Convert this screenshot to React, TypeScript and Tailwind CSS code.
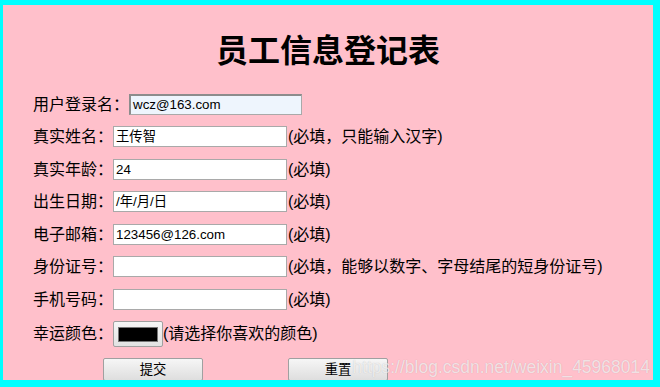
const font = "font-[family-name:'Liberation_Sans','Noto_Sans_CJK_SC',sans-serif]";

type Row = { label: string; value?: string; hint?: string; gap: string };

const rows: Row[] = [
  { label: '真实姓名：', value: '王传智', hint: '(必填，只能输入汉字)', gap: 'mt-[11px]' },
  { label: '真实年龄：', value: '24', hint: '(必填)', gap: 'mt-[12px]' },
  { label: '出生日期：', value: '/年/月/日', hint: '(必填)', gap: 'mt-[11px]' },
  { label: '电子邮箱：', value: '123456@126.com', hint: '(必填)', gap: 'mt-[12px]' },
  { label: '身份证号：', value: '', hint: '(必填，能够以数字、字母结尾的短身份证号)', gap: 'mt-[11px]' },
  { label: '手机号码：', value: '', hint: '(必填)', gap: 'mt-[12px]' },
];

function TextBox({ value, className }: { value: string; className: string }) {
  return (
    <div
      className={`flex items-center shrink-0 h-[21px] px-[2px] text-[13.33px] text-black bg-white border border-[#a9a9a9] ${className}`}
    >
      {value}
    </div>
  );
}

export default function App() {
  return (
    <div className={`w-[660px] h-[387px] bg-[#00ffff] pt-[5px] pl-[3px] ${font}`}>
      <div className="relative w-[650px] h-[375px] bg-[#ffc0cb] overflow-hidden pl-[30px] pt-[30px] text-black">
        <h1 className="text-center text-[32px] leading-[32px] font-bold -ml-[30px]">员工信息登记表</h1>

        <div className="mt-[27px] flex items-center h-[21px] text-[16px] whitespace-nowrap">
          <span className="shrink-0">用户登录名：</span>
          <div className="flex items-center shrink-0 w-[173px] h-[21px] px-[2px] text-[13.33px] bg-[#eef5fd] border border-[#a9a9a9] border-t-2 border-l-2 border-t-[#8c8c8c] border-l-[#8c8c8c]">
            wcz@163.com
          </div>
        </div>

        {rows.map((r) => (
          <div key={r.label} className={`${r.gap} flex items-center h-[21px] text-[16px] whitespace-nowrap`}>
            <span className="shrink-0">{r.label}</span>
            <TextBox value={r.value ?? ''} className="w-[174px]" />
            <span className="ml-px">{r.hint}</span>
          </div>
        ))}

        <div className="mt-[11px] flex items-center h-[26px] text-[16px] whitespace-nowrap">
          <span className="shrink-0">幸运颜色：</span>
          <div className="flex items-center justify-center shrink-0 w-[50px] h-[26px] rounded-[2px] border border-[#a0a0a0] bg-gradient-to-b from-[#f6f6f6] to-[#e2e2e2]">
            <div className="w-[40px] h-[15px] bg-black border border-[#777]" />
          </div>
          <span>(请选择你喜欢的颜色)</span>
        </div>

        <div className="mt-[11px] flex gap-[85px] ml-[70px]">
          <div className="flex items-center justify-center w-[100px] h-[23px] text-[13.33px] rounded-[2px] border border-[#a0a0a0] bg-gradient-to-b from-[#f6f6f6] to-[#dedede]">
            提交
          </div>
          <div className="flex items-center justify-center w-[100px] h-[23px] text-[13.33px] rounded-[2px] border border-[#a0a0a0] bg-gradient-to-b from-[#f6f6f6] to-[#dedede]">
            重置
          </div>
        </div>

        <div className="absolute right-[3px] bottom-[2px] text-[17.5px] leading-[22px] text-white/70 [text-shadow:0_0_1px_rgba(0,0,0,0.2)]">
          https://blog.csdn.net/weixin_45968014
        </div>
      </div>
    </div>
  );
}
